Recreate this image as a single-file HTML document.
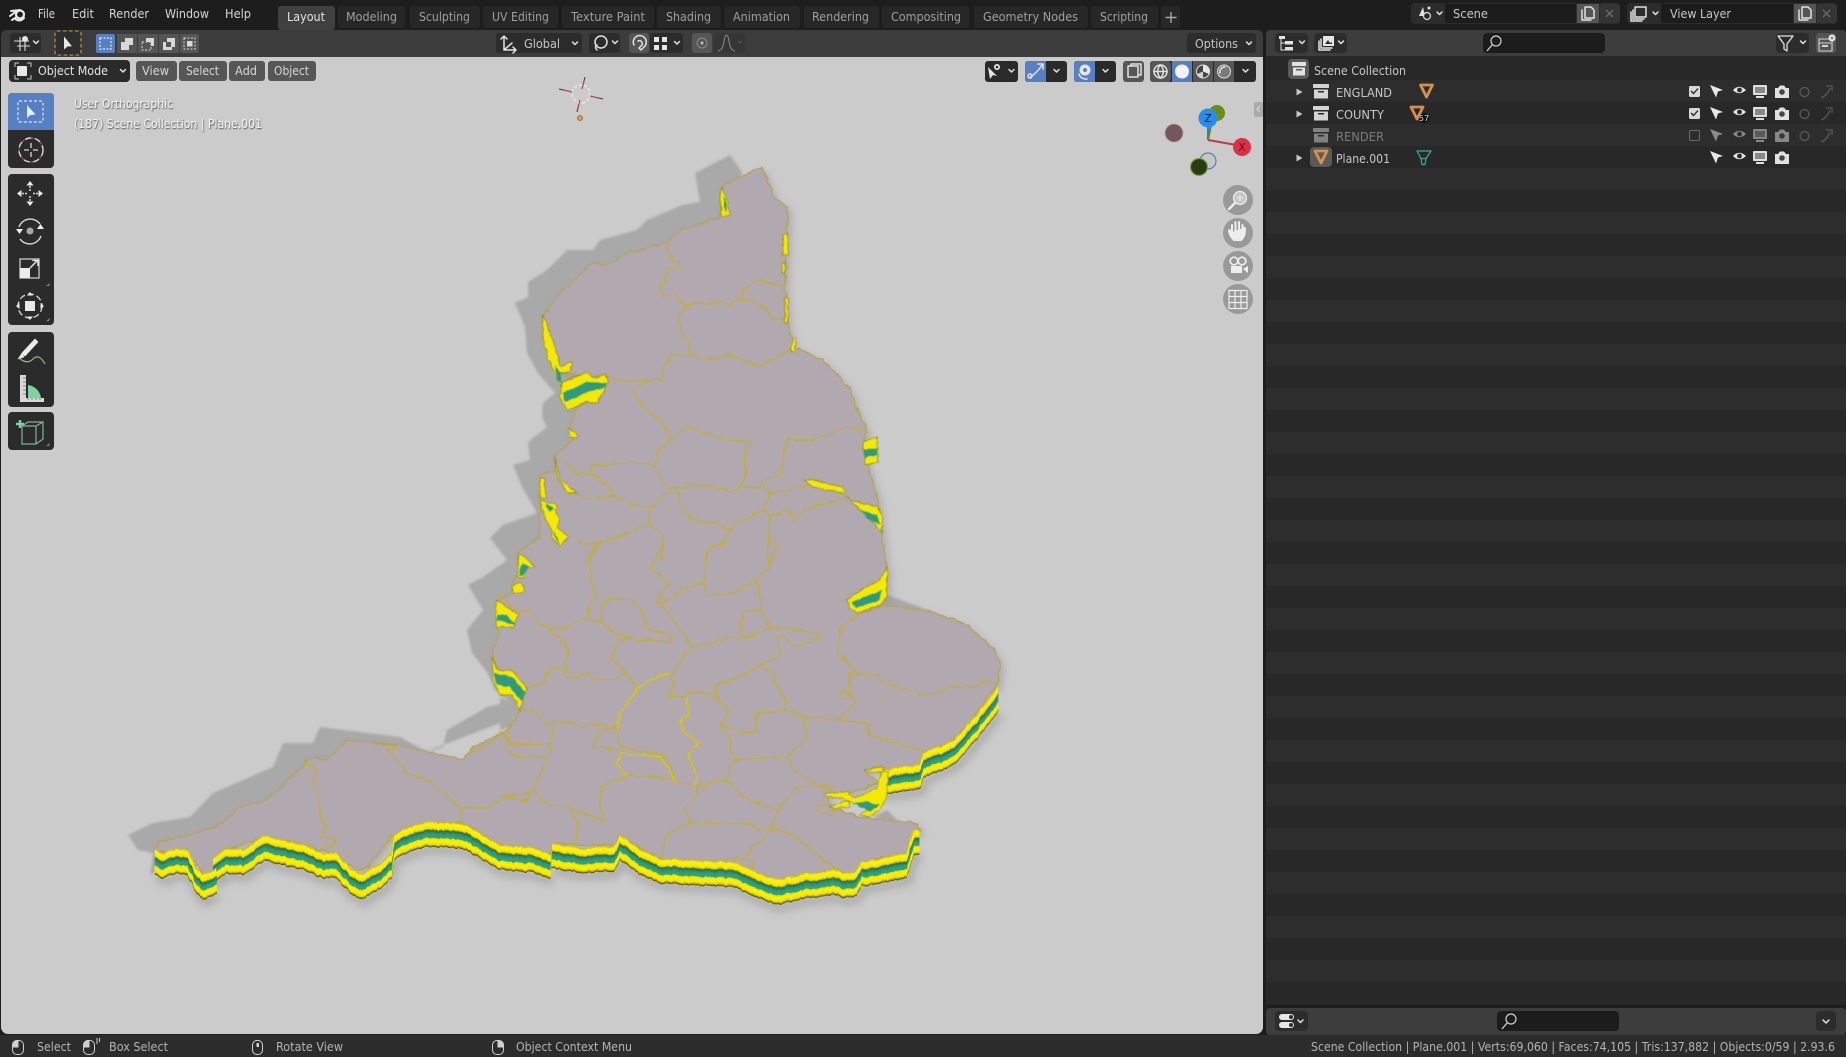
<!DOCTYPE html>
<html><head><meta charset="utf-8"><title>Blender</title>
<style>
html,body{margin:0;padding:0;background:#1d1d1d;width:1846px;height:1057px;overflow:hidden}
svg{display:block;filter:blur(.35px)}
text{font-family:"DejaVu Sans","Liberation Sans",sans-serif;font-size:12px}
.m{fill:#d6d6d6}.t{fill:#9f9f9f}.o{fill:#c6c6c6}.s{fill:#b4b4b4}.w{fill:#e4e4e4}
.ic{fill:none;stroke:#e2e2e2;stroke-width:1.5;stroke-linecap:round;stroke-linejoin:round}
.f{fill:#e6e6e6}
.co{fill:none;stroke-linejoin:round;stroke-linecap:round}
</style></head><body>
<svg xmlns="http://www.w3.org/2000/svg" width="1846" height="1057" viewBox="0 0 1846 1057">
<defs>
<filter id="rough" x="-5%" y="-5%" width="110%" height="110%" color-interpolation-filters="sRGB"><feTurbulence type="fractalNoise" baseFrequency="0.2 0.01" numOctaves="2" seed="4"/><feDisplacementMap in="SourceGraphic" scale="4" xChannelSelector="R" yChannelSelector="G"/></filter>
<filter id="line" x="-2%" y="-2%" width="104%" height="104%" color-interpolation-filters="sRGB"><feTurbulence type="fractalNoise" baseFrequency="0.14" numOctaves="2" seed="9"/><feDisplacementMap in="SourceGraphic" scale="5" xChannelSelector="R" yChannelSelector="G"/></filter>
<filter id="bit" x="-10%" y="-10%" width="120%" height="120%" color-interpolation-filters="sRGB"><feTurbulence type="fractalNoise" baseFrequency="0.18" numOctaves="2" seed="3"/><feDisplacementMap in="SourceGraphic" scale="3" xChannelSelector="R" yChannelSelector="G"/><feGaussianBlur stdDeviation=".4"/></filter>
<filter id="b1"><feGaussianBlur stdDeviation="1"/></filter>
<filter id="b4" x="-10%" y="-10%" width="120%" height="120%"><feGaussianBlur stdDeviation="4"/></filter>
<filter id="tx" x="-5%" y="-30%" width="110%" height="160%"><feDropShadow dx=".6" dy="1" stdDeviation=".5" flood-color="#3a3a3a" flood-opacity=".9"/></filter>
<polygon id="land" points="758,168 762,168 775,198 788,208 786,257 785,287 788,325 795,347 823,360 850,388 857,410 867,430 863,447 868,467 878,500 882,533 885,560 887,567 887,597 858,613 888,605 933,612 967,625 993,648 1000,663 998,683 967,727 955,740 923,753 920,767 890,770 882,767 865,770 877,783 850,793 827,793 830,807 860,817 917,823 920,830 910,840 907,852 865,862 855,877 837,870 777,880 750,870 727,862 667,862 640,848 618,835 615,845 580,845 552,843 550,858 510,847 502,845 463,823 427,823 393,835 367,868 357,870 330,853 300,843 263,837 227,850 217,860 218,877 205,877 193,860 178,850 155,852 158,842 182,837 217,827 240,807 267,800 302,767 310,757 327,760 347,740 400,745 463,760 472,748 507,730 522,708 493,660 493,647 498,638 497,617 497,602 512,593 512,585 520,567 518,553 540,537 540,475 555,470 555,457 575,437 570,427 575,410 600,390 607,377 560,373 543,317 560,293 593,263 607,265 623,255 667,242 680,230 720,217 722,187"/>
<g id="w">
<polyline transform="translate(110,560) scale(.33333)" points="135,870 150,878 165,880 185,870 205,865 235,870 255,915 280,945 320,925"/>
<polyline transform="translate(110,560) scale(.33333)" points="310,895 350,865 400,870 430,850 465,825 530,845 580,855 640,880 680,880 720,925 755,945 820,905 840,880 850,825 900,800 950,785 1040,790 1080,800 1130,830 1170,855 1260,862 1323,882"/>
<polyline transform="translate(500,540) scale(.33333)" points="155,910 240,925 340,920 360,885 420,930 480,955 590,962 700,965 750,990 830,1020 920,1000 1010,990 1030,1000 1065,995 1085,965 1220,940 1240,870 1258,870"/>
<polyline transform="translate(500,540) scale(.33333)" points="1270,640 1360,600 1395,565 1440,510 1495,440"/>
<polyline transform="translate(500,540) scale(.33333)" points="1150,690 1260,672 1270,640"/>
</g>
</defs>

<rect width="1846" height="1057" fill="#1d1d1d"/>

<!-- Top bar tabs -->
<g>
<rect x="278" y="6" width="57" height="24" rx="3" fill="#404040"/>
<g fill="#272727">
<rect x="338" y="6" width="67" height="22" rx="3"/><rect x="410" y="6" width="70" height="22" rx="3"/><rect x="483" y="6" width="75" height="22" rx="3"/><rect x="562" y="6" width="92" height="22" rx="3"/><rect x="657" y="6" width="64" height="22" rx="3"/><rect x="724" y="6" width="76" height="22" rx="3"/><rect x="804" y="6" width="75" height="22" rx="3"/><rect x="882" y="6" width="87" height="22" rx="3"/><rect x="974" y="6" width="114" height="22" rx="3"/><rect x="1091" y="6" width="67" height="22" rx="3"/><rect x="1161" y="6" width="19" height="22" rx="3"/>
</g>
<text x="287" y="21" class="w" textLength="38" lengthAdjust="spacingAndGlyphs">Layout</text>
<text x="346" y="21" class="t" textLength="51" lengthAdjust="spacingAndGlyphs">Modeling</text>
<text x="419" y="21" class="t" textLength="51" lengthAdjust="spacingAndGlyphs">Sculpting</text>
<text x="492" y="21" class="t" textLength="57" lengthAdjust="spacingAndGlyphs">UV Editing</text>
<text x="571" y="21" class="t" textLength="74" lengthAdjust="spacingAndGlyphs">Texture Paint</text>
<text x="666" y="21" class="t" textLength="45" lengthAdjust="spacingAndGlyphs">Shading</text>
<text x="733" y="21" class="t" textLength="57" lengthAdjust="spacingAndGlyphs">Animation</text>
<text x="812" y="21" class="t" textLength="57" lengthAdjust="spacingAndGlyphs">Rendering</text>
<text x="891" y="21" class="t" textLength="70" lengthAdjust="spacingAndGlyphs">Compositing</text>
<text x="983" y="21" class="t" textLength="95" lengthAdjust="spacingAndGlyphs">Geometry Nodes</text>
<text x="1100" y="21" class="t" textLength="48" lengthAdjust="spacingAndGlyphs">Scripting</text>
<path d="M1171 12v11M1165.500 17.500h11" stroke="#a5a5a5" stroke-width="1.400" fill="none"/>
</g>
<!-- Blender logo & menu -->
<g fill="none" stroke="#e8e8e8" stroke-linecap="round">
<circle cx="20" cy="14.500" r="4" stroke-width="2.200"/>
<path d="M10 16 L16 11.500 M11 11 L20 10 M12 20 L16 17.500 M16 19.500 Q20 22 24 18" stroke-width="2"/>
</g>
<text x="38" y="18" class="m" textLength="17" lengthAdjust="spacingAndGlyphs">File</text>
<text x="72" y="18" class="m" textLength="22" lengthAdjust="spacingAndGlyphs">Edit</text>
<text x="109" y="18" class="m" textLength="40" lengthAdjust="spacingAndGlyphs">Render</text>
<text x="165" y="18" class="m" textLength="44" lengthAdjust="spacingAndGlyphs">Window</text>
<text x="225" y="18" class="m" textLength="26" lengthAdjust="spacingAndGlyphs">Help</text>

<!-- Scene / View Layer fields -->
<g>
<rect x="1411" y="3" width="209" height="21" rx="4" fill="#2c2c2c"/>
<rect x="1445" y="4" width="131" height="19" fill="#1c1c1c"/>
<rect x="1577" y="4" width="22" height="19" fill="#555"/>
<rect x="1600" y="4" width="20" height="19" rx="3" fill="#353535"/>
<path d="M1423 7 l-4 9 h6z" fill="#e0e0e0"/><circle cx="1427" cy="16" r="3.500" fill="#2c2c2c" stroke="#e0e0e0" stroke-width="1.200"/><circle cx="1429" cy="8" r="1.500" fill="#e0e0e0"/>
<path d="M1437 12l2.500 2.500 2.500-2.500" class="ic"/>
<text x="1453" y="18" class="o" textLength="35" lengthAdjust="spacingAndGlyphs">Scene</text>
<path d="M1585 7h6l3 3v8h-9z M1582 10v10h9" class="ic" stroke-width="1.200"/>
<path d="M1606 10l7 7m0-7l-7 7" stroke="#6a6a6a" stroke-width="1.300"/>
<rect x="1627" y="3" width="210" height="21" rx="4" fill="#2c2c2c"/>
<rect x="1661" y="4" width="132" height="19" fill="#1c1c1c"/>
<rect x="1794" y="4" width="22" height="19" fill="#555"/>
<rect x="1817" y="4" width="20" height="19" rx="3" fill="#353535"/>
<path d="M1635 7h11v10h-11z M1633 10v9h11 M1631 12v9h11" class="ic" stroke-width="1.100"/>
<path d="M1653 12l2.500 2.500 2.500-2.500" class="ic"/>
<text x="1670" y="18" class="o" textLength="61" lengthAdjust="spacingAndGlyphs">View Layer</text>
<path d="M1802 7h6l3 3v8h-9z M1799 10v10h9" class="ic" stroke-width="1.200"/>
<path d="M1823 10l7 7m0-7l-7 7" stroke="#6a6a6a" stroke-width="1.300"/>
</g>

<!-- Viewport header -->
<path d="M1 57V35a5 5 0 0 1 5-5H1258a5 5 0 0 1 5 5V57z" fill="#3c3c3c"/>
<!-- Viewport -->
<rect x="1" y="57" width="1262" height="977" fill="#cbcbcb" rx="0"/>
<path d="M1 1027v7h7a7 7 0 0 1-7-7z" fill="#1d1d1d"/>
<path d="M1263 1027v7h-7a7 7 0 0 0 7-7z" fill="#1d1d1d"/>

<!-- Map: shadows -->
<g fill="#a9a9a9" filter="url(#b1)">
<polygon points="742,172 730,155 695,173 700,202 682,205 647,220 637,230 600,240 593,250 567,250 547,270 528,282 528,297 515,303 525,327 527,353 538,373 555,393 543,403 542,417 547,427 528,442 530,460 513,465 522,487 537,513 503,525 490,538 507,560 483,577 468,585 483,610 467,630 472,653 487,672 495,690 510,702 487,707 447,730 443,747 427,752 400,737 320,727 313,743 283,743 273,767 213,793 190,817 153,823 128,835 138,850 153,853 150,875 158,870 300,800 560,700 720,300"/>
<polygon points="888,595 933,612 890,607 870,625 860,615"/>
<polygon points="873,817 887,810 900,823"/>
<polygon points="500,697 520,707 510,727 500,730"/>
</g>
<!-- soft shadow SE -->
<use href="#land" transform="translate(4,4)" fill="#8f8f8f" opacity=".5" filter="url(#b4)"/>
<use href="#w" transform="translate(2,28)" fill="none" stroke="#888" stroke-width="21" opacity=".5" filter="url(#b4)"/>

<!-- Land -->
<use href="#land" fill="#b1a8b0" stroke="#b3a55c" stroke-width="1.500" stroke-linejoin="round" filter="url(#line)"/>

<!-- County lines -->
<g filter="url(#line)">
<g class="co" stroke="#c0ae42">
<g transform="translate(460,140) scale(.33333)" stroke-width="4.500">
<polyline points="620,305 620,330 640,360 660,365 655,380 625,385 612,410 620,425 600,440 605,470 640,462 680,495"/>
<polyline points="680,495 730,490 790,485 810,498 835,475 880,425 905,420 950,435 975,440"/>
<polyline points="835,475 880,485 920,505 935,540 975,535"/>
<polyline points="680,495 655,530 665,580 690,610 685,645"/>
<polyline points="1005,620 950,650 895,680 860,665 810,645 770,655 745,660 690,645 635,645 610,680 605,720 560,720 480,725 445,710"/>
<polyline points="560,725 520,755 545,795 600,840 635,895 600,925 585,975"/>
<polyline points="635,895 680,860 730,880 800,900 870,905 850,960 860,1000 840,1040"/>
<polyline points="585,975 510,965 450,975 395,975 390,1000 350,1000 325,975 310,960"/>
<polyline points="585,975 610,1030 630,1045 650,1045 700,1035 790,1045 810,1055 840,1040 915,1045 905,1025 960,1005 980,900 1060,900 1160,860 1220,870"/>
<polyline points="915,1045 935,1060 1040,1035"/>
<polyline points="390,1000 450,1040 455,1065 520,1095 575,1100 630,1045"/>
<polyline points="330,1065 430,1075 450,1065"/>
<polyline points="575,1100 565,1150 500,1180 420,1210 370,1210 345,1195"/>
<polyline points="565,1150 610,1185 605,1260"/>
<polyline points="650,1045 665,1100 700,1140 770,1150 810,1170 830,1150 910,1110 930,1060"/>
<polyline points="910,1110 930,1130 925,1260"/>
<polyline points="930,1130 990,1110 1000,1140 1040,1105 1160,1075"/>
<polyline points="810,1170 790,1215 750,1220 735,1260"/>
<polyline points="420,1210 385,1260"/>
</g>
<g transform="translate(500,540) scale(.33333)" stroke-width="4.500">
<polyline points="0,165 50,215 95,215 115,250 145,265 190,265 240,240 265,235 300,245 350,285 380,290 420,300 510,305 515,285 440,265 430,215 395,180 340,175 310,185 300,245"/>
<polyline points="265,235 265,200 290,170 275,130 265,50 300,0"/>
<polyline points="380,290 345,320 335,360 380,400 410,450"/>
<polyline points="145,265 180,295 205,330 195,410 240,410 255,395 275,415 340,420 380,400"/>
<polyline points="195,385 150,385 130,430 85,440"/>
<polyline points="70,510 100,510 135,550 210,545 250,560 300,550 350,570 360,520 395,470 410,450 450,420 510,400 520,440 505,470 560,470 565,520 540,550 550,575 595,610 565,640 590,710 585,740"/>
<polyline points="520,400 555,340 580,325 520,240 490,200 470,175 510,130 450,85 470,50 490,0"/>
<polyline points="490,190 555,145 610,130 620,70 630,15 680,10"/>
<polyline points="610,130 620,165 700,160 770,120 805,85 820,40 830,15 800,0"/>
<polyline points="580,325 680,295 730,295 810,265 785,210 770,120"/>
<polyline points="785,210 735,215 720,260 735,295"/>
<polyline points="810,265 840,265 870,265 955,280 950,300 880,320 860,295 830,290 840,345 790,370 730,405 640,440 650,470 600,455 560,460"/>
<polyline points="790,370 830,430 860,490 855,510 915,530 920,600 860,650 880,690 930,720 980,750"/>
<polyline points="1070,225 1020,265 1015,340 1070,395 1045,400 1055,470 1065,490 1015,540 920,530"/>
<polyline points="1070,400 1130,405 1150,430 1280,465 1360,440 1430,440 1450,420 1490,430"/>
<polyline points="1015,540 1100,550 1110,590 1230,620 1270,635"/>
<polyline points="855,510 770,520 770,580 715,575 660,555 690,510 640,470"/>
<polyline points="660,555 690,600 700,660 680,720 590,740"/>
<polyline points="700,660 850,650"/>
<polyline points="680,720 725,770 800,800 830,810 815,870"/>
<polyline points="830,810 890,745 930,735"/>
<polyline points="815,865 880,885 960,950 1010,985"/>
<polyline points="815,865 770,870 750,850 570,850 500,880 485,960"/>
<polyline points="570,850 555,800 590,770 590,740 510,715 380,705 300,745 305,840 200,800 130,790 100,745 135,670 135,650 50,650 15,630 25,600 0,575"/>
<polyline points="380,705 345,670 365,640 480,650 530,725 500,650 360,620 350,560 300,570 280,620 355,630"/>
<polyline points="160,565 150,640"/>
<polyline points="30,610 150,615"/>
<polyline points="100,745 60,765 0,770"/>
<polyline points="210,810 235,850 225,905"/>
<polyline points="735,950 760,915 780,910 805,880"/>
<polyline points="700,955 750,955 760,985"/>
<polyline points="1020,460 1035,450 1050,470 1020,475"/>
<polyline points="950,800 990,790 1020,810 990,825 950,810"/>
<polyline points="975,765 1000,740 930,735"/>
</g>
<g transform="translate(110,560) scale(.33333)" stroke-width="4.500">
<polyline points="870,555 830,570 880,620 890,640 950,660 1000,700 1050,740 1055,790"/>
<polyline points="1050,745 1130,745 1190,710 1250,725 1260,700"/>
<polyline points="1085,570 1100,575 1190,510 1205,560 1260,550"/>
<polyline points="590,610 625,630 605,670 625,700 630,760 650,800 635,830 680,840 660,860 640,860"/>
<polyline points="825,850 850,830 820,860"/>
</g>
</g>
<g class="co" stroke="#d6c710">
<polyline transform="translate(500,540) scale(.33333)" stroke-width="5" points="560,470 565,520 540,550 550,575 595,610 565,640 590,710 585,740"/>
<polyline transform="translate(500,540) scale(.33333)" stroke-width="5" points="350,570 360,520 395,470 410,450 450,420 510,400"/>
<polyline transform="translate(500,540) scale(.33333)" stroke-width="4.500" points="380,705 345,670 365,640 480,650 530,725"/>
</g>
</g>

<!-- Wall sweep -->
<g fill="none" stroke-linejoin="round" stroke-width="5.400" filter="url(#rough)">
<use href="#w" transform="translate(0,24)" stroke="#57520e"/>
<use href="#w" transform="translate(0,23)" stroke="#a39c08"/>
<use href="#w" transform="translate(0,22)" stroke="#e0d400"/>
<use href="#w" transform="translate(0,21)" stroke="#f2e800"/>
<use href="#w" transform="translate(0,20)" stroke="#f6ec00"/>
<use href="#w" transform="translate(0,19)" stroke="#f8ee00"/>
<use href="#w" transform="translate(0,18)" stroke="#f8ee00"/>
<use href="#w" transform="translate(0,17)" stroke="#f6ec00"/>
<use href="#w" transform="translate(0,16)" stroke="#dfe200"/>
<use href="#w" transform="translate(0,15)" stroke="#35a37f"/>
<use href="#w" transform="translate(0,14)" stroke="#31a085"/>
<use href="#w" transform="translate(0,13)" stroke="#2f9e84"/>
<use href="#w" transform="translate(0,12)" stroke="#2e9a80"/>
<use href="#w" transform="translate(0,11)" stroke="#2c947a"/>
<use href="#w" transform="translate(0,10)" stroke="#288a6e"/>
<use href="#w" transform="translate(0,9)" stroke="#287a58"/>
<use href="#w" transform="translate(0,8)" stroke="#3f6e28"/>
<use href="#w" transform="translate(0,7)" stroke="#c0b800"/>
<use href="#w" transform="translate(0,6)" stroke="#eee200"/>
<use href="#w" transform="translate(0,5)" stroke="#f6ea00"/>
<use href="#w" transform="translate(0,4)" stroke="#f9ee00"/>
<use href="#w" transform="translate(0,3)" stroke="#fbf000"/>
<use href="#w" transform="translate(0,2)" stroke="#fcf208"/>
<use href="#w" transform="translate(0,1)" stroke="#f2e820"/>
<use href="#w" stroke="#c8bc34" stroke-width="3.500"/>
</g>

<!-- Small walls -->
<g filter="url(#bit)">
<g fill="#f4e806" stroke="#8f8610" stroke-width=".7" stroke-linejoin="round">
<polygon points="562,383 572,378 587,373 594,378 605,375 608,383 597,403 587,402 578,406 567,410 560,397"/>
<polygon points="543,315 549,330 555,347 560,367 570,362 572,363 570,372 560,373 562,387 555,373 548,358 543,337"/>
<polygon points="722,187 727,200 730,215 722,217 720,195"/>
<polygon points="783,235 788,233 788,255 783,255"/>
<polygon points="782,263 785,263 785,273 782,273"/>
<polygon points="785,297 788,297 788,323 785,323"/>
<polygon points="793,338 796,338 795,352 790,352"/>
<polygon points="863,442 877,437 878,462 865,465"/>
<polygon points="805,480 810,480 842,487 850,500 877,507 882,517 882,532 873,523 860,510 843,493 813,487"/>
<polygon points="568,428 578,435 577,438 570,437"/>
<polygon points="555,457 560,480 577,493 567,492 557,477"/>
<polygon points="540,500 558,505 555,510 560,520 557,527 568,537 560,547 552,537 550,527 545,517"/>
<polygon points="540,478 544,478 546,498 541,498"/>
<polygon points="847,600 860,590 880,580 887,567 887,597 880,605 858,613 850,608"/>
<polygon points="518,555 523,555 535,567 528,568 523,578 518,577"/>
<polygon points="512,585 520,583 525,588 522,593 513,593"/>
<polygon points="497,600 518,615 513,627 505,627 497,627 496,613"/>
<polygon points="492,657 497,670 512,670 527,688 520,710 513,695 500,695 493,680"/>
<g transform="translate(500,540) scale(.33333)" stroke-width="2">
<polygon points="1145,690 1165,695 1160,770 1140,810 1105,830 1080,825 1110,805 1060,790 1030,775 980,770 975,760 1040,755 1060,775 1130,745"/>
<polygon points="990,800 1045,780 1050,800 1000,805"/>
<polygon points="1095,690 1145,680 1150,697 1100,695"/>
</g>
</g>
<g fill="#2e9a80">
<polygon points="563,393 587,382 607,383 605,388 587,392 565,402"/>
<polygon points="555,365 560,372 562,383 558,380"/>
<polygon points="864,450 877,448 877,455 864,458"/>
<polygon points="860,510 877,515 880,525 870,520"/>
<polygon points="852,602 882,590 880,600 855,608"/>
<polygon points="545,503 553,508 550,512"/>
<polygon points="552,530 558,537 560,545 555,537"/>
<polygon points="522,563 530,567 523,575 519,575"/>
<polygon points="498,615 507,615 515,625 505,622 497,620"/>
<polygon points="494,673 512,677 525,692 522,702 510,687 497,685"/>
<polygon points="724,196 727,207 726,214 723,205"/>
<polygon transform="translate(500,540) scale(.33333)" points="1060,790 1100,785 1140,795 1110,815"/>
</g>
</g>

<!-- Header row 1 -->
<rect x="10" y="33" width="31" height="20" rx="3" fill="#2c2c2c"/>
<path d="M14 41h15M17 46h13M20 37v14M25 37v14" stroke="#dcdcdc" stroke-width="1.100" fill="none"/><circle cx="25" cy="39" r="3" fill="#e4e4e4"/>
<path d="M33.500 41l2.500 2.500 2.500-2.500" class="ic" stroke-width="1.200"/>
<rect x="55" y="31" width="26" height="24" rx="2" fill="#2f2f2f" stroke="#d09a3a" stroke-width="1.100" stroke-dasharray="3.500 2.500"/>
<path d="M64 36.500v13l3.500-3 4.500-.2z" fill="#e8e8e8"/>
<rect x="96" y="34" width="19" height="19" rx="2" fill="#5680c2"/>
<rect x="100" y="38" width="11" height="11" fill="none" stroke="#e6e6e6" stroke-width="1.200" stroke-dasharray="2 1.500"/>
<rect x="117" y="34" width="20" height="19" fill="#555"/><rect x="138" y="34" width="20" height="19" fill="#555"/><rect x="159" y="34" width="20" height="19" fill="#555"/><rect x="180" y="34" width="19" height="19" rx="2" fill="#555"/>
<path d="M125 38h8v7h-4v5h-8v-8h4z" fill="#d8d8d8"/>
<path d="M146 38h8v8h-3v-4h-5z" fill="#d8d8d8"/><rect x="142" y="42" width="9" height="8" fill="none" stroke="#d8d8d8" stroke-dasharray="2 1.500"/>
<path d="M167 38h8v9h-3v-5h-5z M163 42h9v8h-9z" fill="#d8d8d8"/><rect x="166" y="42" width="5" height="5" fill="#555"/>
<rect x="184" y="38" width="11" height="11" fill="none" stroke="#d8d8d8" stroke-dasharray="2 1.500"/><rect x="187" y="41" width="5.500" height="5.500" fill="#d8d8d8"/>
<rect x="496" y="33" width="86" height="20" rx="3" fill="#2c2c2c"/>
<path d="M504 36v14h12M504 50l8-7M501 39l3-3 3 3M513 47l3 3-3 3" class="ic" stroke-width="1.100"/>
<text x="524" y="48" class="o" textLength="36" lengthAdjust="spacingAndGlyphs">Global</text>
<path d="M572.500 42l2.500 2.500 2.500-2.500" class="ic" stroke-width="1.200"/>
<rect x="589" y="33" width="31" height="20" rx="3" fill="#2c2c2c"/>
<circle cx="601" cy="42" r="6" class="ic" stroke-width="1.100"/><path d="M597 50q-3-3 0-5" class="ic" stroke-width="1.100"/>
<path d="M612.500 41l2.500 2.500 2.500-2.500" class="ic" stroke-width="1.200"/>
<rect x="629" y="33" width="20" height="20" rx="3" fill="#555"/>
<path d="M634 45a6.500 6.500 0 1 1 10 2l-3 3-2-2 3-3a3 3 0 0 0-4-4" class="ic" stroke="#bcbcbc" stroke-width="1.200"/>
<rect x="650" y="33" width="33" height="20" rx="3" fill="#2c2c2c"/>
<rect x="654" y="37" width="5" height="5" fill="#e6e6e6"/><rect x="662" y="37" width="5" height="5" fill="#e6e6e6"/><rect x="654" y="45" width="5" height="5" fill="#e6e6e6"/><rect x="662" y="45" width="5" height="5" fill="#e6e6e6"/>
<path d="M674.500 41.500l2.500 2.500 2.500-2.500" class="ic" stroke-width="1.200"/>
<rect x="692" y="33" width="20" height="20" rx="3" fill="#565656"/>
<circle cx="702" cy="43" r="5" fill="none" stroke="#8a8a8a"/><circle cx="702" cy="43" r="1.500" fill="#bcbcbc"/>
<rect x="714" y="33" width="31" height="20" rx="3" fill="#363636"/>
<path d="M718 51q5-1 6-10q1-6 2.500-6t2.500 6q1 9 6 10" fill="none" stroke="#888" stroke-width="1.100"/>
<path d="M738 41l2 2 2-2" fill="none" stroke="#555" stroke-width="1.100"/>
<rect x="1187" y="33" width="69" height="20" rx="3" fill="#2c2c2c"/>
<text x="1195" y="48" class="o" textLength="43" lengthAdjust="spacingAndGlyphs">Options</text>
<path d="M1246.500 42l2.500 2.500 2.500-2.500" class="ic" stroke-width="1.200"/>

<!-- Viewport header row -->
<rect x="9" y="60" width="121" height="22" rx="4" fill="#2a2a2a"/>
<rect x="17" y="66" width="10" height="10" rx="1" fill="#e6e6e6"/>
<path d="M15 67v-4h4M27 63h4v4M31 75v4h-4M19 79h-4v-4" fill="none" stroke="#c8c8c8" stroke-width="1"/>
<text x="38" y="75" class="w" textLength="70" lengthAdjust="spacingAndGlyphs">Object Mode</text>
<path d="M120.500 69.500l2.500 2.500 2.500-2.500" class="ic" stroke-width="1.200"/>
<rect x="136" y="61" width="41" height="20" rx="3" fill="#565656"/><rect x="179" y="61" width="48" height="20" rx="3" fill="#565656"/><rect x="229" y="61" width="36" height="20" rx="3" fill="#565656"/><rect x="268" y="61" width="48" height="20" rx="3" fill="#565656"/>
<text x="142" y="75" class="m" textLength="27" lengthAdjust="spacingAndGlyphs">View</text>
<text x="186" y="75" class="m" textLength="33" lengthAdjust="spacingAndGlyphs">Select</text>
<text x="235" y="75" class="m" textLength="22" lengthAdjust="spacingAndGlyphs">Add</text>
<text x="274" y="75" class="m" textLength="35" lengthAdjust="spacingAndGlyphs">Object</text>

<text x="74" y="108" fill="#f2f2f2" filter="url(#tx)" textLength="99" lengthAdjust="spacingAndGlyphs">User Orthographic</text>
<text x="74" y="128" fill="#f2f2f2" filter="url(#tx)" textLength="188" lengthAdjust="spacingAndGlyphs">(187) Scene Collection | Plane.001</text>

<!-- 3D cursor -->
<g fill="none">
<circle cx="581" cy="94" r="9" stroke="#f4e4e4" stroke-width="1.500" stroke-dasharray="3 2"/>
<path d="M559 89l13 3M590 96l13 3M585 77l-3 12M580 100l-3 12" stroke="#3c3c3c" stroke-width="1"/>
<path d="M564 90l8 2M590 96l8 2M584 82l-2 7M580 100l-2 7" stroke="#b84a58" stroke-width="1"/>
<circle cx="580" cy="118" r="2.500" fill="#e59a2c" stroke="#8a6a3c" stroke-width=".8"/>
</g>

<!-- Viewport right header -->
<rect x="985" y="61" width="33" height="21" rx="3" fill="#2a2a2a"/>
<path d="M988 67l2 12 3-4 4 1z" fill="#e6e6e6"/><circle cx="997" cy="67" r="3" fill="#e6e6e6"/><circle cx="997" cy="67" r="1.300" fill="#2a2a2a"/>
<path d="M1009 69.500l2.500 2.500 2.500-2.500" class="ic" stroke-width="1.200"/>
<rect x="1025" y="61" width="42" height="21" rx="3" fill="#2a2a2a"/><path d="M1028 61h18v21h-18a3 3 0 0 1-3-3v-15a3 3 0 0 1 3-3z" fill="#5680c2"/>
<path d="M1029 78q8-5 13-13M1038 64h5v5M1030 74a2 2 0 1 0 .01 0" class="ic" stroke-width="1.100"/>
<path d="M1054 69.500l2.500 2.500 2.500-2.500" class="ic" stroke-width="1.200"/>
<rect x="1074" y="61" width="42" height="21" rx="3" fill="#2a2a2a"/><path d="M1077 61h18v21h-18a3 3 0 0 1-3-3v-15a3 3 0 0 1 3-3z" fill="#5680c2"/>
<circle cx="1085" cy="70" r="5.500" fill="#e6e6e6"/><circle cx="1085" cy="70" r="2" fill="#5680c2"/><path d="M1079 74a7 7 0 0 0 8 5" class="ic" stroke-width="1.100"/>
<path d="M1103 69.500l2.500 2.500 2.500-2.500" class="ic" stroke-width="1.200"/>
<rect x="1123" y="61" width="21" height="21" rx="3" fill="#565656"/>
<path d="M1128 66h10v11h-10z M1131 66v-2h10v11h-3" class="ic" stroke-width="1.100"/>
<rect x="1150" y="61" width="106" height="21" rx="3" fill="#2a2a2a"/>
<rect x="1150" y="61" width="21" height="21" rx="3" fill="#565656"/><rect x="1172" y="61" width="20" height="21" fill="#5680c2"/><rect x="1193" y="61" width="20" height="21" fill="#565656"/><rect x="1214" y="61" width="20" height="21" fill="#565656"/>
<circle cx="1160.500" cy="71.500" r="6.500" class="ic" stroke-width="1.100"/><path d="M1154 71.500h13M1160.500 65a9 9 0 0 1 0 13a9 9 0 0 1 0-13" class="ic" stroke-width="1"/>
<circle cx="1182" cy="71.500" r="7" fill="#f2f2f2"/>
<circle cx="1203" cy="71.500" r="6.500" fill="#444" stroke="#e0e0e0"/><path d="M1203 65a6.500 6.500 0 0 1 6 9l-6-2.500z" fill="#e6e6e6"/><path d="M1197 74a6.500 6.500 0 0 0 6 4v-6.500z" fill="#cfcfcf"/>
<circle cx="1224" cy="71.500" r="6.500" fill="#7a7a7a" stroke="#e0e0e0"/><path d="M1220 73a5 5 0 0 1 5-6" class="ic" stroke-width="1.100"/>
<path d="M1243 69.500l2.500 2.500 2.500-2.500" class="ic" stroke-width="1.200"/>

<rect x="1254" y="102" width="9" height="15" rx="2" fill="#ababab"/>
<path d="M1260 106l-3 3 3 3" fill="none" stroke="#dcdcdc"/>

<!-- Gizmo -->
<path d="M1208 140l34 6" stroke="#c0394e" stroke-width="2"/>
<path d="M1208 140l0-16" stroke="#2a7fd0" stroke-width="2"/>
<path d="M1208 140l4-20" stroke="#4f8a3c" stroke-width="2"/>
<circle cx="1174" cy="133" r="9" fill="#73595e" stroke="#c99aa4" stroke-width=".8"/>
<circle cx="1208" cy="161" r="8" fill="#c6c6c6" stroke="#4670a8" stroke-width="1"/>
<circle cx="1199" cy="167" r="8.500" fill="#2c3c12" stroke="#79a83c" stroke-width="1.200"/>
<circle cx="1217" cy="113" r="8" fill="#6a8e12"/>
<circle cx="1208" cy="118" r="9.500" fill="#2b8cf0"/>
<circle cx="1242" cy="147" r="9" fill="#dc3048"/>
<text x="1208" y="122" text-anchor="middle" fill="#123" style="font-size:11px">Z</text>
<text x="1242" y="151" text-anchor="middle" fill="#611" style="font-size:11px">X</text>

<!-- Nav buttons -->
<g fill="#999">
<circle cx="1238" cy="200" r="15"/><circle cx="1238" cy="233" r="15"/><circle cx="1238" cy="266" r="15"/><circle cx="1238" cy="299" r="15"/>
</g>
<g>
<circle cx="1240" cy="198" r="6.500" fill="#c8c8c8" stroke="#eee" stroke-width="1.200"/><path d="M1240 195v6M1237 198h6" stroke="#eee"/><path d="M1235 203l-6 6" stroke="#eee" stroke-width="2.500" stroke-linecap="round"/>
<path d="M1232 232v-7M1235.500 231v-9M1239 231v-9M1242.500 232v-7M1232 232q-3-3-3-1 1 5 5 9h7q4-3 4-11 0-2-2-1" stroke="#eee" stroke-width="2" fill="#eee" stroke-linecap="round" stroke-linejoin="round"/>
<circle cx="1234" cy="261" r="3.800" fill="none" stroke="#eee" stroke-width="1.700"/><circle cx="1242" cy="261" r="3.800" fill="none" stroke="#eee" stroke-width="1.700"/><rect x="1231" y="266" width="11" height="7" fill="#eee"/><path d="M1243 269l5-3v7z" fill="#eee"/>
<path d="M1229 290.500h18v18h-18zM1229 296.500h18M1229 302.500h18M1235 290.500v18M1241 290.500v18" fill="none" stroke="#eee" stroke-width="1.200"/>
</g>

<!-- Left toolbar -->
<rect x="8" y="93" width="46" height="75" rx="4" fill="#2b2b2b"/>
<path d="M12 93h38a4 4 0 0 1 4 4v33H8V97a4 4 0 0 1 4-4z" fill="#5680c2"/>
<rect x="18" y="101" width="25" height="21" rx="1" fill="none" stroke="#c8d2e4" stroke-width="1.400" stroke-dasharray="3 2"/>
<path d="M27 105v13l3.500-3 5-.5z" fill="#e8eef8"/>
<circle cx="31" cy="150" r="12" fill="none" stroke="#d8d8d8" stroke-width="1.400" stroke-dasharray="7 3"/><circle cx="31" cy="150" r="12" fill="none" stroke="#9a4a4a" stroke-width="1.400" stroke-dasharray="3 7" stroke-dashoffset="4"/>
<path d="M31 143v5M31 152v5M24 150h5M33 150h5" stroke="#d8d8d8" stroke-width="1.300"/>
<rect x="8" y="174" width="46" height="151" rx="4" fill="#2b2b2b"/>
<path d="M30 181l3.500 4.500h-7zM30 206l-3.500-4.500h7zM17 193.500l4.500-3.500v7zM43 193.500l-4.500-3.500v7z" fill="#ececec"/>
<path d="M30 186v5M30 196v5M22 193.500h5M33 193.500h5" stroke="#d8d8d8" stroke-width="1.500" stroke-dasharray="2 1"/>
<circle cx="30" cy="231" r="3.500" fill="#a8a8a8"/>
<path d="M19 227a12 12 0 0 1 21-3M41 236a12 12 0 0 1-21 3" fill="none" stroke="#d8d8d8" stroke-width="1.400"/><path d="M16 229h7l-3.500 5zM37 229h7l-3.500-5z" fill="#ececec"/>
<rect x="20" y="259" width="19" height="19" fill="none" stroke="#d8d8d8" stroke-width="1.200"/><rect x="20" y="268" width="10" height="10" fill="#ececec"/><path d="M30 268l7-7M33 260.500h5v5" class="ic" stroke-width="1.300"/>
<circle cx="30" cy="306" r="12" fill="none" stroke="#d8d8d8" stroke-width="1.300" stroke-dasharray="6 3"/><rect x="25" y="301" width="10" height="10" fill="#e8e8e8"/><path d="M30 292l3 3.500h-6zM30 320l3-3.500h-6zM16 306l3.500-3v6zM44 306l-3.500-3v6z" fill="#ececec"/>
<path d="M50 283l-1 3h-3z M50 318l-1 3h-3z" fill="#888"/>
<rect x="8" y="332" width="46" height="75" rx="4" fill="#2b2b2b"/>
<path d="M35 339l-13 14 3 3 13-14zM22 353l-4 6 6-2z" fill="#ececec" stroke="#ececec" stroke-width=".6" stroke-linejoin="round"/>
<path d="M19 358q8 7 14 1t12 5" fill="none" stroke="#8fb89a" stroke-width="1.200"/>
<path d="M28 385a15 15 0 0 1 13 13H28z" fill="#7fd29e"/>
<rect x="20" y="375" width="6" height="25" fill="#d8d8d8"/><rect x="20" y="398" width="24" height="4" fill="#d8d8d8"/>
<path d="M23 378h3M23 382h3M23 386h3M23 390h3M23 394h3M28 398v2M32 398v2M36 398v2M40 398v2" stroke="#666" stroke-width=".8"/>
<rect x="8" y="412" width="46" height="38" rx="4" fill="#2b2b2b"/>
<path d="M20 420v8M16 424h8" stroke="#7fd29e" stroke-width="2.400"/>
<path d="M22 426h14l7-4v17l-7 5H22zM22 426l6-4h15M36 426v18" fill="none" stroke="#7fb496" stroke-width="1.200"/>
<path d="M50 443l-1 3h-3z" fill="#888"/>

<!-- Outliner -->
<path d="M1266 34a4 4 0 0 1 4-4h572a4 4 0 0 1 4 4v22h-580z" fill="#3d3d3d"/>
<rect x="1266" y="56" width="580" height="949" fill="#282828"/>
<g fill="#2d2d2d">
<rect x="1266" y="80" width="580" height="22"/><rect x="1266" y="124" width="580" height="22"/><rect x="1266" y="168" width="580" height="22"/><rect x="1266" y="212" width="580" height="22"/><rect x="1266" y="256" width="580" height="22"/><rect x="1266" y="300" width="580" height="22"/><rect x="1266" y="344" width="580" height="22"/><rect x="1266" y="388" width="580" height="22"/><rect x="1266" y="432" width="580" height="22"/><rect x="1266" y="476" width="580" height="22"/><rect x="1266" y="520" width="580" height="22"/><rect x="1266" y="564" width="580" height="22"/><rect x="1266" y="608" width="580" height="22"/><rect x="1266" y="652" width="580" height="22"/><rect x="1266" y="696" width="580" height="22"/><rect x="1266" y="740" width="580" height="22"/><rect x="1266" y="784" width="580" height="22"/><rect x="1266" y="828" width="580" height="22"/><rect x="1266" y="872" width="580" height="22"/><rect x="1266" y="916" width="580" height="22"/><rect x="1266" y="960" width="580" height="22"/>
</g>
<rect x="1275" y="33" width="33" height="20" rx="4" fill="#2c2c2c"/>
<path d="M1280 38h4M1281 38v12h4M1281 43h4" stroke="#e0e0e0" fill="none"/><rect x="1285" y="41" width="8" height="3.500" fill="#e0e0e0"/><rect x="1285" y="47" width="8" height="3.500" fill="#e0e0e0"/><rect x="1279" y="36" width="6" height="3" fill="#e0e0e0"/>
<path d="M1299.500 41l2.500 2.500 2.500-2.500" class="ic" stroke-width="1.200"/>
<rect x="1314" y="33" width="33" height="20" rx="4" fill="#2c2c2c"/>
<rect x="1323" y="36" width="11" height="10" fill="#e6e6e6"/><path d="M1321 39v9h11M1319 41v9h11" class="ic" stroke-width="1.100"/><path d="M1325 44l3-4 2 3 2-1v2z" fill="#2c2c2c"/>
<path d="M1338.500 41l2.500 2.500 2.500-2.500" class="ic" stroke-width="1.200"/>
<rect x="1483" y="33" width="122" height="20" rx="4" fill="#1c1c1c"/>
<circle cx="1496" cy="41" r="5" fill="none" stroke="#d0d0d0" stroke-width="1.200"/><path d="M1492 45l-5 6" stroke="#d0d0d0" stroke-width="1.300"/>
<rect x="1776" y="33" width="33" height="20" rx="4" fill="#2c2c2c"/>
<path d="M1778 36h15l-6 8v7l-3-2v-5z" fill="none" stroke="#e2e2e2" stroke-width="1.300" stroke-linejoin="round"/>
<path d="M1800.500 41l2.500 2.500 2.500-2.500" class="ic" stroke-width="1.200"/>
<rect x="1816" y="33" width="20" height="20" rx="3" fill="#555"/>
<path d="M1819 39h13v12h-13zM1819 43h12" fill="none" stroke="#d2d2d2" stroke-width="1.100"/><rect x="1822" y="45" width="6" height="2" fill="#d2d2d2"/><circle cx="1832" cy="38" r="3.500" fill="#e6e6e6"/><path d="M1832 36.500v3M1830.500 38h3" stroke="#555" stroke-width=".8"/>

<!-- rows -->
<rect x="1288" y="59" width="21" height="20" rx="4" fill="#5a5a5a"/>
<g id="box"><rect x="1292" y="62" width="14" height="4" rx=".5" fill="#e2e2e2"/><path d="M1293 67.500h12v8h-12z" fill="#e2e2e2"/><rect x="1296" y="69" width="6" height="1.500" fill="#5a5a5a"/></g>
<text x="1314" y="75" class="o" textLength="92" lengthAdjust="spacingAndGlyphs">Scene Collection</text>

<path d="M1296.500 88.500l6 3.500-6 3.500z" fill="#c8c8c8"/>
<rect x="1313" y="84" width="16" height="4" rx=".5" fill="#d4d4d4"/><path d="M1314 89.500h14v9h-14z" fill="#d4d4d4"/><rect x="1318" y="91" width="6" height="1.500" fill="#2d2d2d"/>
<text x="1336" y="97" class="o" textLength="56" lengthAdjust="spacingAndGlyphs">ENGLAND</text>
<path d="M1420.500 85h12l-6 12z" fill="none" stroke="#d8904a" stroke-width="2.800" stroke-linejoin="round"/>

<path d="M1296.500 110.500l6 3.500-6 3.500z" fill="#c8c8c8"/>
<rect x="1313" y="106" width="16" height="4" rx=".5" fill="#d4d4d4"/><path d="M1314 111.500h14v9h-14z" fill="#d4d4d4"/><rect x="1318" y="113" width="6" height="1.500" fill="#282828"/>
<text x="1336" y="119" class="o" textLength="48" lengthAdjust="spacingAndGlyphs">COUNTY</text>
<path d="M1411 107h12l-6 12z" fill="none" stroke="#d8904a" stroke-width="2.800" stroke-linejoin="round"/>
<circle cx="1424" cy="118" r="5" fill="#101010"/><text x="1424" y="121" text-anchor="middle" fill="#d8d8d8" style="font-size:8px">57</text>

<g opacity=".5">
<rect x="1313" y="128" width="16" height="4" rx=".5" fill="#d4d4d4"/><path d="M1314 133.500h14v9h-14z" fill="#d4d4d4"/><rect x="1318" y="135" width="6" height="1.500" fill="#2d2d2d"/>
<text x="1336" y="141" class="o" textLength="48" lengthAdjust="spacingAndGlyphs">RENDER</text>
</g>

<path d="M1296.500 154.500l6 3.500-6 3.500z" fill="#c8c8c8"/>
<rect x="1310" y="147" width="22" height="20" rx="4" fill="#5a5a5a"/>
<path d="M1315 151h12l-6 12z" fill="none" stroke="#d8904a" stroke-width="2.800" stroke-linejoin="round"/>
<text x="1336" y="163" class="o" textLength="54" lengthAdjust="spacingAndGlyphs">Plane.001</text>
<path d="M1417 151h14l-5 7.500-1 6h-3l-1-6zM1420.500 158.500h5" fill="none" stroke="#2fb295" stroke-width="1.200" stroke-linejoin="round"/>

<!-- row right icons -->
<g>
<rect x="1689" y="86" width="11" height="11" rx="1.500" fill="#d8d8d8"/><path d="M1691 91l2.500 2.500 4.500-5" fill="none" stroke="#222" stroke-width="1.300"/>
<path d="M1710 85l13 5-5 1.500-2 6z" fill="#e8e8e8"/>
<path d="M1733 90q6-6.500 13 0q-7 6.500-13 0z" fill="#e6e6e6"/><circle cx="1739.500" cy="90" r="2.400" fill="#2d2d2d"/>
<rect x="1753" y="85" width="14" height="10" rx="1" fill="#e0e0e0"/><rect x="1755" y="87" width="10" height="6" fill="#888"/><rect x="1756" y="96" width="8" height="2" fill="#e0e0e0"/>
<path d="M1775 88h3l2-2.500h4l2 2.500h3v10h-14z" fill="#e0e0e0"/><circle cx="1782" cy="92" r="2.800" fill="#444"/>
<circle cx="1804.500" cy="92" r="4.500" fill="none" stroke="#5a5a5a" stroke-width="1.300"/>
<path d="M1821 98q6-2 9-10M1826 86h6v5" fill="none" stroke="#5a5a5a" stroke-width="1.300"/>
</g>
<g>
<rect x="1689" y="108" width="11" height="11" rx="1.500" fill="#d8d8d8"/><path d="M1691 113l2.500 2.500 4.500-5" fill="none" stroke="#222" stroke-width="1.300"/>
<path d="M1710 107l13 5-5 1.500-2 6z" fill="#e8e8e8"/>
<path d="M1733 112q6-6.500 13 0q-7 6.500-13 0z" fill="#e6e6e6"/><circle cx="1739.500" cy="112" r="2.400" fill="#282828"/>
<rect x="1753" y="107" width="14" height="10" rx="1" fill="#e0e0e0"/><rect x="1755" y="109" width="10" height="6" fill="#888"/><rect x="1756" y="118" width="8" height="2" fill="#e0e0e0"/>
<path d="M1775 110h3l2-2.500h4l2 2.500h3v10h-14z" fill="#e0e0e0"/><circle cx="1782" cy="114" r="2.800" fill="#444"/>
<circle cx="1804.500" cy="114" r="4.500" fill="none" stroke="#5a5a5a" stroke-width="1.300"/>
<path d="M1821 120q6-2 9-10M1826 108h6v5" fill="none" stroke="#5a5a5a" stroke-width="1.300"/>
</g>
<g opacity=".5">
<rect x="1689.500" y="130.500" width="10" height="10" rx="1.500" fill="none" stroke="#aaa"/>
<path d="M1710 129l13 5-5 1.500-2 6z" fill="#e8e8e8"/>
<path d="M1733 134q6-6.500 13 0q-7 6.500-13 0z" fill="#e6e6e6"/><circle cx="1739.500" cy="134" r="2.400" fill="#2d2d2d"/>
<rect x="1753" y="129" width="14" height="10" rx="1" fill="#e0e0e0"/><rect x="1755" y="131" width="10" height="6" fill="#888"/><rect x="1756" y="140" width="8" height="2" fill="#e0e0e0"/>
<path d="M1775 132h3l2-2.500h4l2 2.500h3v10h-14z" fill="#e0e0e0"/><circle cx="1782" cy="136" r="2.800" fill="#444"/>
</g>
<circle cx="1804.500" cy="136" r="4.500" fill="none" stroke="#5a5a5a" stroke-width="1.300"/>
<path d="M1821 142q6-2 9-10M1826 130h6v5" fill="none" stroke="#5a5a5a" stroke-width="1.300"/>
<g>
<path d="M1710 151l13 5-5 1.500-2 6z" fill="#e8e8e8"/>
<path d="M1733 156q6-6.500 13 0q-7 6.500-13 0z" fill="#e6e6e6"/><circle cx="1739.500" cy="156" r="2.400" fill="#282828"/>
<rect x="1753" y="151" width="14" height="10" rx="1" fill="#e0e0e0"/><rect x="1755" y="153" width="10" height="6" fill="#888"/><rect x="1756" y="162" width="8" height="2" fill="#e0e0e0"/>
<path d="M1775 154h3l2-2.500h4l2 2.500h3v10h-14z" fill="#e0e0e0"/><circle cx="1782" cy="158" r="2.800" fill="#444"/>
</g>

<!-- Properties header -->
<rect x="1266" y="1008" width="580" height="27" rx="4" fill="#3d3d3d"/>
<rect x="1275" y="1011" width="33" height="20" rx="4" fill="#2c2c2c"/>
<rect x="1279" y="1014" width="15" height="6" rx="3" fill="#e6e6e6"/><circle cx="1291" cy="1017" r="2" fill="#2c2c2c"/>
<rect x="1279" y="1022" width="15" height="6" rx="3" fill="#e6e6e6"/><circle cx="1291" cy="1025" r="2" fill="#2c2c2c"/>
<path d="M1298 1020l2.500 2.500 2.500-2.500" class="ic" stroke-width="1.200"/>
<rect x="1497" y="1011" width="122" height="20" rx="4" fill="#1c1c1c"/>
<circle cx="1511" cy="1019" r="5" fill="none" stroke="#d0d0d0" stroke-width="1.200"/><path d="M1507 1023l-5 6" stroke="#d0d0d0" stroke-width="1.300"/>
<rect x="1816" y="1011" width="20" height="20" rx="4" fill="#2c2c2c"/><path d="M1823 1020l3 3 3-3" class="ic" stroke-width="1.300"/>

<!-- Status bar -->
<rect x="0" y="1035" width="1846" height="22" fill="#2c2c2c"/>
<g fill="none" stroke="#cfcfcf" stroke-width="1">
<rect x="12.500" y="1040.500" width="11" height="14" rx="4.500"/><path d="M18 1040.500a5 5 0 0 0-5.500 5v1.500h5.500z" fill="#cfcfcf"/>
<rect x="83.500" y="1040.500" width="11" height="14" rx="4.500"/><path d="M89 1040.500a5 5 0 0 0-5.500 5v1.500h5.500z" fill="#cfcfcf"/><path d="M97 1038v6M99.500 1038v4" />
<rect x="252.500" y="1040.500" width="10" height="14" rx="4.500"/><rect x="256.500" y="1043" width="2.500" height="4" fill="#cfcfcf" stroke="none"/>
<rect x="492.500" y="1040.500" width="11" height="14" rx="4.500"/><path d="M498 1040.500a5 5 0 0 1 5.500 5v1.500h-5.500z" fill="#cfcfcf"/>
</g>
<text x="37" y="1051" class="s" textLength="34" lengthAdjust="spacingAndGlyphs">Select</text>
<text x="109" y="1051" class="s" textLength="59" lengthAdjust="spacingAndGlyphs">Box Select</text>
<text x="276" y="1051" class="s" textLength="67" lengthAdjust="spacingAndGlyphs">Rotate View</text>
<text x="516" y="1051" class="s" textLength="116" lengthAdjust="spacingAndGlyphs">Object Context Menu</text>
<text x="1311" y="1051" class="s" textLength="524" lengthAdjust="spacingAndGlyphs">Scene Collection | Plane.001 | Verts:69,060 | Faces:74,105 | Tris:137,882 | Objects:0/59 | 2.93.6</text>
</svg>
</body></html>
